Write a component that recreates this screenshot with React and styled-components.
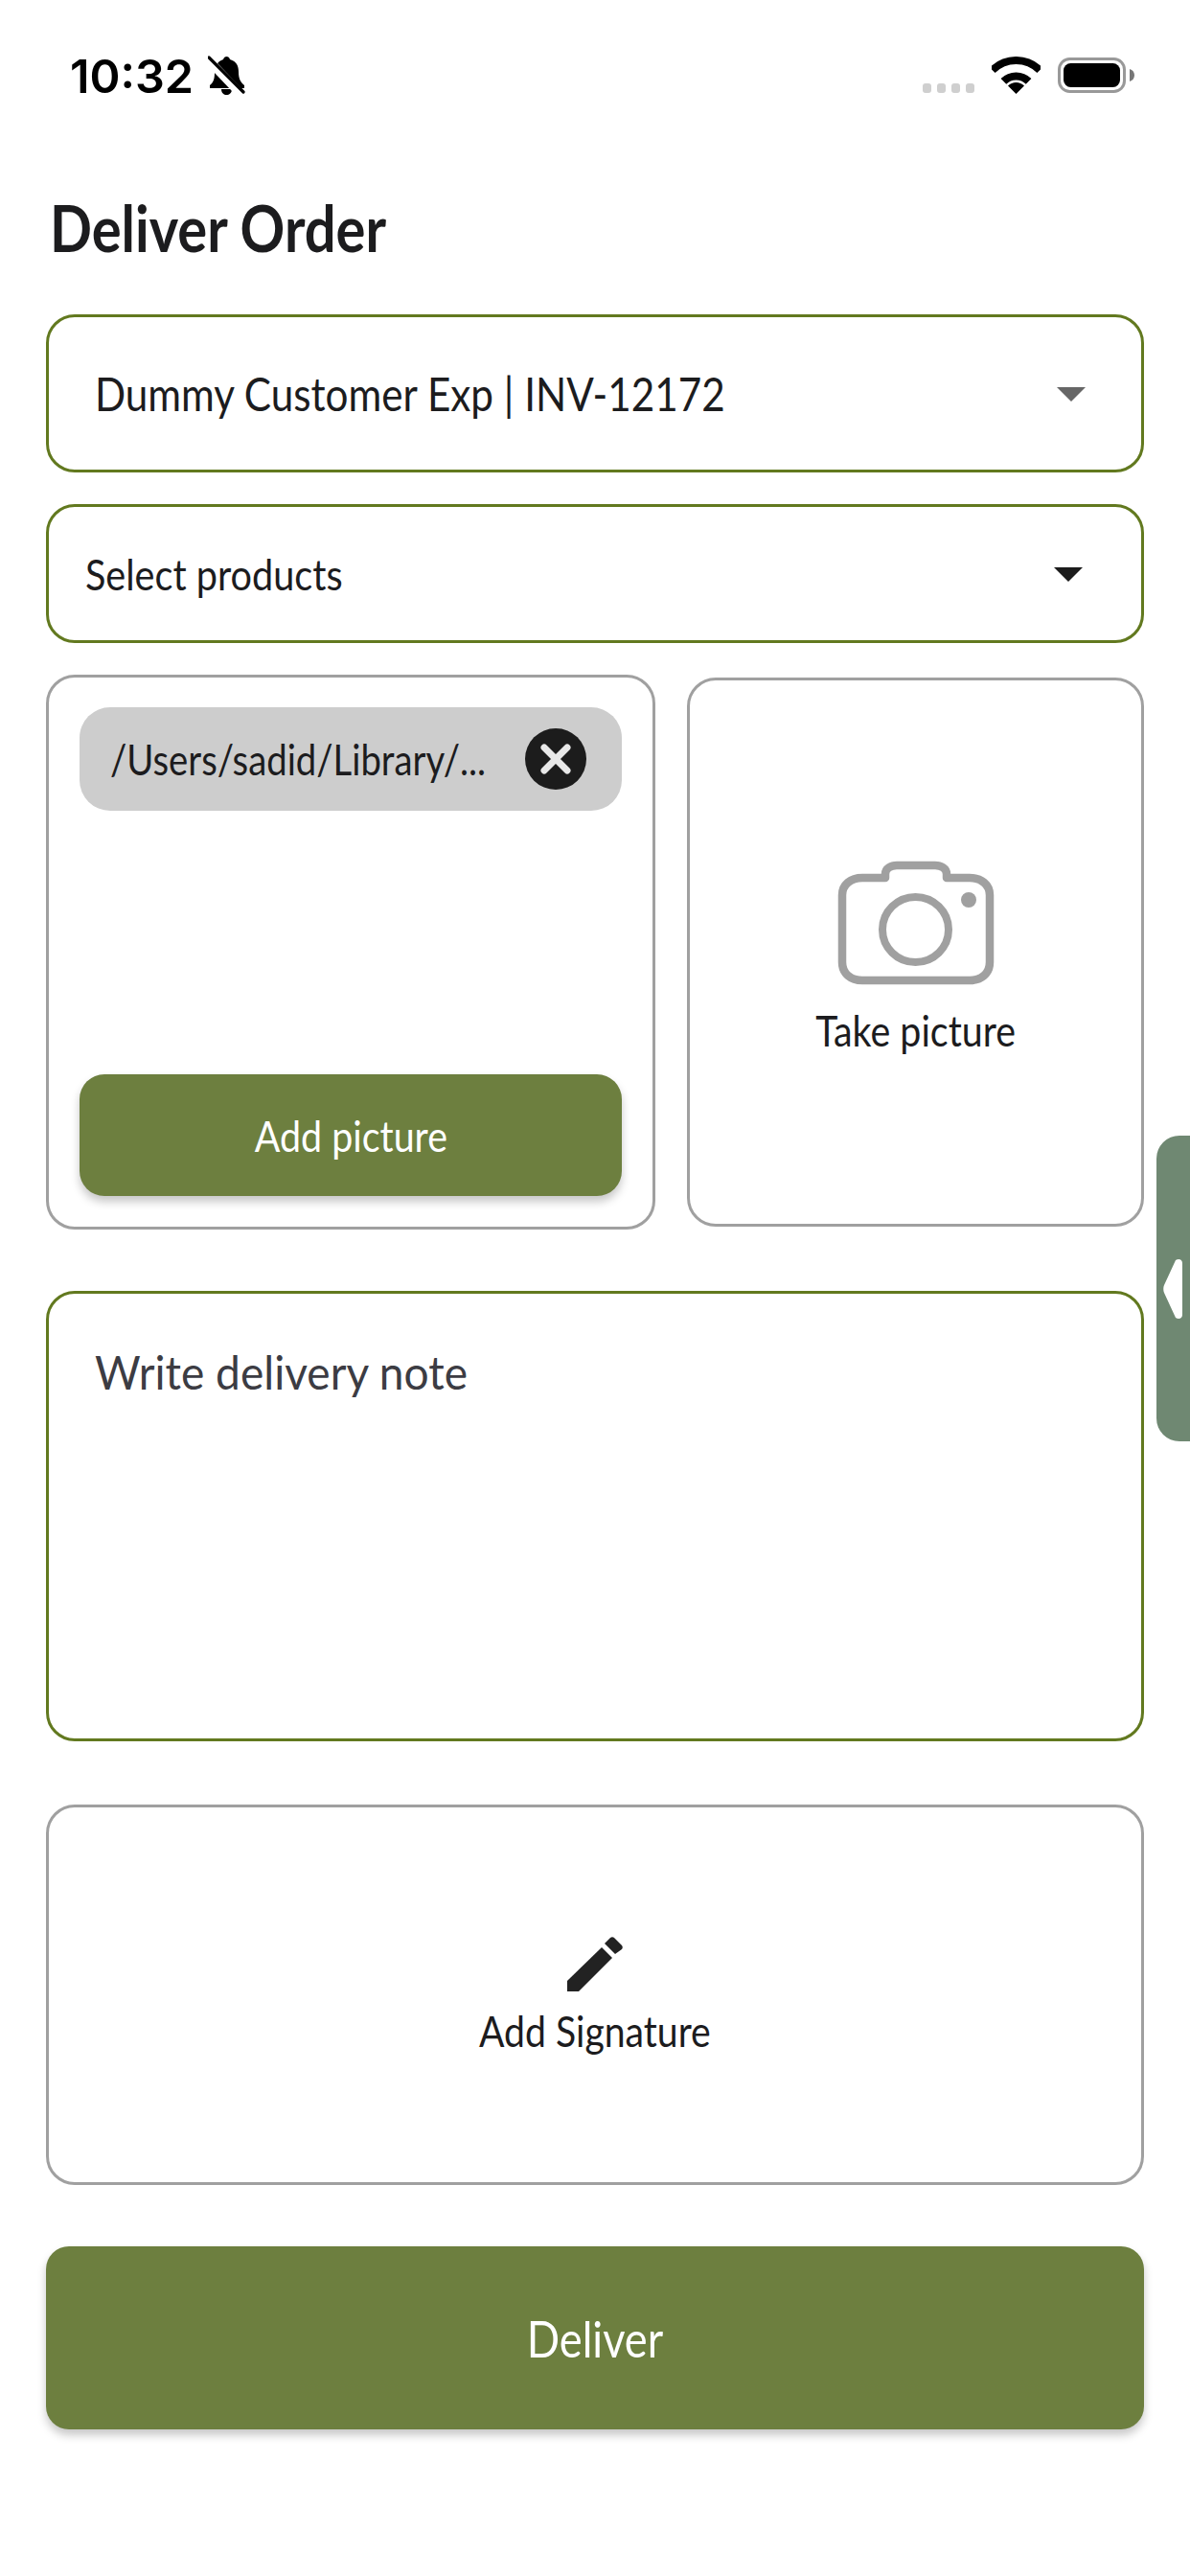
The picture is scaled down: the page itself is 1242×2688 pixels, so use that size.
import React from 'react';
import styled, { createGlobalStyle } from 'styled-components';

const GlobalStyle = createGlobalStyle`
  html, body {
    margin: 0;
    padding: 0;
    background: #fff;
  }
  body {
    font-family: "Lato", "Liberation Sans", sans-serif;
    color: #1c1c1e;
  }
`;

const Page = styled.div`
  position: relative;
  width: 1242px;
  height: 2688px;
  overflow: hidden;
  box-sizing: border-box;
  background: #fff;
`;

const StatusBar = styled.div`
  display: flex;
  align-items: center;
  justify-content: space-between;
  height: 60px;
  padding: 48px 58px 0 73px;
`;

const StatusLeft = styled.div`
  display: flex;
  align-items: center;
  gap: 15px;
`;

const Clock = styled.span`
  margin-top: 2px;
  font-family: "Inter", sans-serif;
  font-size: 48.5px;
  font-weight: 600;
  color: #000;
`;

const StatusRight = styled.div`
  display: flex;
  align-items: center;
  gap: 18px;
`;

const SignalDots = styled.div`
  display: flex;
  gap: 6px;
  margin-top: 28px;
`;

const SignalDot = styled.span`
  width: 9px;
  height: 10px;
  border-radius: 3px;
  background: #cfcfcf;
`;

const Content = styled.main`
  display: flex;
  flex-direction: column;
  padding: 92px 48px 0;
`;

// the app font is narrower than anything installed, so the text is squeezed
const Narrow = styled.span`
  display: inline-block;
  transform: scaleX(${p => p.$x});
  transform-origin: ${p => p.$origin || 'center'};
  white-space: nowrap;
`;

const Title = styled.h1`
  margin: 0 0 52px 4px;
  font-size: 66px;
  line-height: 76px;
  font-weight: 700;
  color: #1c1c1e;
`;

const SelectBox = styled.div`
  display: flex;
  align-items: center;
  justify-content: space-between;
  box-sizing: border-box;
  height: ${p => p.$height}px;
  padding: ${p => p.$padding};
  margin-bottom: 33px;
  border: 3px solid #62791f;
  border-radius: 30px;
  background: #fff;
`;

const SelectLabel = styled.span`
  margin-top: 1px;
  font-size: ${p => p.$size}px;
  line-height: 1;
  color: #1c1c1e;
`;

const Caret = styled.span`
  width: 0;
  height: 0;
  margin-top: 2px;
  border-left: 15.5px solid transparent;
  border-right: 15.5px solid transparent;
  border-top: 15px solid ${p => p.$color};
`;

const PictureRow = styled.div`
  display: grid;
  grid-template-columns: 636px 477px;
  justify-content: space-between;
  align-items: start;
  margin-bottom: 64px;
`;

const OutlineCard = styled.div`
  box-sizing: border-box;
  border: 3px solid #a0a0a0;
  border-radius: 30px;
  background: #fff;
`;

const PickerCard = styled(OutlineCard)`
  display: flex;
  flex-direction: column;
  justify-content: space-between;
  height: 579px;
  padding: 31px 32px 32px;
`;

const FileChip = styled.div`
  display: flex;
  align-items: center;
  justify-content: space-between;
  height: 108px;
  padding: 0 37px 0 32px;
  border-radius: 32px;
  background: #cdcdcd;
`;

const FileName = styled.span`
  flex: 1;
  min-width: 0;
  font-size: 44px;
  color: #1c1c1e;
`;

const ClearButton = styled.span`
  display: flex;
  flex-shrink: 0;
  align-items: center;
  justify-content: center;
  width: 64px;
  height: 64px;
  border-radius: 50%;
  background: #1c1c1c;
`;

const GreenButton = styled.button`
  box-sizing: border-box;
  width: 100%;
  height: ${p => p.$height}px;
  border: none;
  border-radius: ${p => p.$radius}px;
  background: #6d7f3f;
  color: #fff;
  font-family: inherit;
  font-size: ${p => p.$size}px;
  box-shadow: 0 6px 10px rgba(0, 0, 0, 0.22);
`;

const CameraCard = styled(OutlineCard)`
  display: flex;
  flex-direction: column;
  align-items: center;
  justify-content: center;
  height: 573px;
  margin-top: 3px;
  padding-top: 12px;
  gap: 21px;
`;

const CardCaption = styled.span`
  font-size: 44px;
  line-height: 52px;
  color: #1c1c1e;
`;

const NoteBox = styled.div`
  box-sizing: border-box;
  height: 470px;
  padding: 53px 48px;
  margin-bottom: 66px;
  border: 3px solid #62791f;
  border-radius: 30px;
  font-size: 48px;
  line-height: 58px;
  color: #3c3c43;
`;

const SignatureCard = styled(OutlineCard)`
  display: flex;
  flex-direction: column;
  align-items: center;
  justify-content: center;
  height: 397px;
  margin-bottom: 64px;
  padding-top: 3px;
  gap: 15px;
`;

const DrawerHandle = styled.div`
  position: absolute;
  top: 1185px;
  right: 0;
  display: flex;
  align-items: center;
  box-sizing: border-box;
  width: 35px;
  height: 319px;
  padding-left: 6px;
  border-radius: 24px 0 0 24px;
  background: #6f8872;
`;

const CameraIcon = () => (
  <svg width="164" height="130" viewBox="0 0 164 130" fill="none">
    <path
      d="M26 18H50V14C50 8 56 5 62 5H102C108 5 114 8 114 14V18H138C150 18 159 25 159 36V106C159 118 150 125 138 125H26C14 125 5 118 5 106V36C5 25 14 18 26 18Z"
      stroke="#a0a0a0"
      strokeWidth="8.5"
      strokeLinejoin="round"
    />
    <ellipse cx="81.5" cy="72" rx="34.5" ry="34" stroke="#a0a0a0" strokeWidth="8" />
    <circle cx="137" cy="41" r="8" fill="#a0a0a0" />
  </svg>
);

const PencilIcon = () => (
  <svg width="58" height="57" viewBox="0 0 58 57" fill="#222">
    <path d="M0 46L36 11L47 22L12 57H0Z" />
    <path d="M39 7L45 1C46 0 48 0 49 1L57 9C58 10 58 12 57 13L50 18Z" />
  </svg>
);

const BellOffIcon = () => (
  <svg width="39" height="41" viewBox="0 0 39 41" fill="#000">
    <path d="M16 4C17 0 22 0 23 4C30 6 32 11 32 17C32 24 34 28 38 31V34H2V31C6 28 7 24 7 17C7 11 10 6 16 4ZM14 35H25C25 43 14 43 14 35Z" />
    <path d="M-2 2L36 42" stroke="#fff" strokeWidth="9" />
    <path d="M1 2L37 38" stroke="#000" strokeWidth="3.2" strokeLinecap="round" />
  </svg>
);

const WifiIcon = () => (
  <svg width="51" height="39" viewBox="0 0 51 39" fill="none">
    <path d="M.75 14.25A35 35 0 0 1 50.25 14.25" stroke="#000" strokeWidth="8" />
    <path d="M12.42 25.92A18.5 18.5 0 0 1 38.58 25.92" stroke="#000" strokeWidth="8" />
    <path d="M25.5 39L17 30.5A12 12 0 0 1 34 30.5Z" fill="#000" />
  </svg>
);

const BatteryIcon = () => (
  <svg width="80" height="37" viewBox="0 0 80 37" fill="none">
    <rect x="1.5" y="1.5" width="68" height="34" rx="11" stroke="#999" strokeWidth="3" />
    <rect x="6" y="6" width="59" height="25" rx="7.5" fill="#000" />
    <path d="M75 12C78 13 80 15 80 18.5C80 22 78 24 75 25Z" fill="#777" />
  </svg>
);

export default function App() {
  return (
    <Page>
      <GlobalStyle />
      <StatusBar>
        <StatusLeft>
          <Clock>10:32</Clock>
          <BellOffIcon />
        </StatusLeft>
        <StatusRight>
          <SignalDots>
            {[0, 1, 2, 3].map(i => <SignalDot key={i} />)}
          </SignalDots>
          <WifiIcon />
          <BatteryIcon />
        </StatusRight>
      </StatusBar>
      <Content>
        <Title><Narrow $x={0.877} $origin="left">Deliver Order</Narrow></Title>
        <SelectBox $height={165} $padding="0 58px 0 48px">
          <SelectLabel $size={48}><Narrow $x={0.88} $origin="left">Dummy Customer Exp | INV-12172</Narrow></SelectLabel>
          <Caret $color="#666" />
        </SelectBox>
        <SelectBox $height={145} $padding="0 61px 0 38px">
          <SelectLabel $size={44}><Narrow $x={0.9} $origin="left">Select products</Narrow></SelectLabel>
          <Caret $color="#1c1c1c" />
        </SelectBox>
        <PictureRow>
          <PickerCard>
            <FileChip>
              <FileName><Narrow $x={0.87} $origin="left">/Users/sadid/Library/...</Narrow></FileName>
              <ClearButton>
                <svg width="34" height="34" viewBox="0 0 34 34" fill="none">
                  <path d="M5 5L29 29M29 5L5 29" stroke="#e8e8e8" strokeWidth="7" strokeLinecap="round" />
                </svg>
              </ClearButton>
            </FileChip>
            <GreenButton $height={127} $radius={26} $size={44}><Narrow $x={0.895}>Add picture</Narrow></GreenButton>
          </PickerCard>
          <CameraCard>
            <CameraIcon />
            <CardCaption><Narrow $x={0.895}>Take picture</Narrow></CardCaption>
          </CameraCard>
        </PictureRow>
        <NoteBox><Narrow $x={0.96} $origin="left">Write delivery note</Narrow></NoteBox>
        <SignatureCard>
          <PencilIcon />
          <CardCaption><Narrow $x={0.89}>Add Signature</Narrow></CardCaption>
        </SignatureCard>
        <GreenButton $height={191} $radius={24} $size={52}><Narrow $x={0.87}>Deliver</Narrow></GreenButton>
      </Content>
      <DrawerHandle>
        <svg width="22" height="64" viewBox="0 0 22 64" fill="#fff">
          <path d="M14 2C17 0 21 1 21 5V59C21 63 17 64 14 62L2 36C1 34 1 30 2 28Z" />
        </svg>
      </DrawerHandle>
    </Page>
  );
}
